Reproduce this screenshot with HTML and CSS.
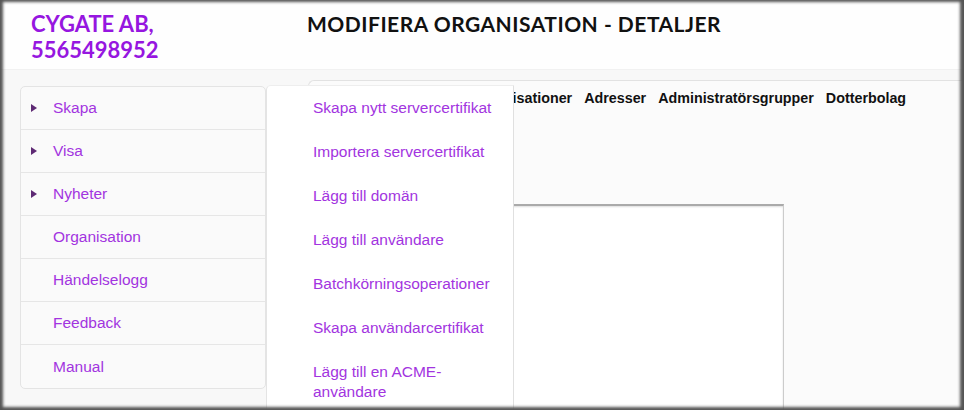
FILE: index.html
```html
<!DOCTYPE html>
<html lang="sv">
<head>
    <meta charset="UTF-8">
    <meta name="viewport" content="width=device-width, initial-scale=1.0">
    <title>Modifiera organisation - Detaljer</title>
    <link rel="stylesheet" href="styles.css">
</head>
<body>
    <div class="frame">
        <div class="header">
            <div class="brand">CYGATE AB,<br>5565498952</div>
            <h1>MODIFIERA ORGANISATION - DETALJER</h1>
        </div>
        <div class="main">
            <ul class="sidebar">
                <li class="has-sub"><span class="arrow"></span>Skapa</li>
                <li class="has-sub"><span class="arrow"></span>Visa</li>
                <li class="has-sub"><span class="arrow"></span>Nyheter</li>
                <li>Organisation</li>
                <li>Händelselogg</li>
                <li>Feedback</li>
                <li>Manual</li>
            </ul>
            <div class="content">
                <div class="tabs">
                    <span>Detaljer</span>
                    <span>Organisationer</span>
                    <span>Adresser</span>
                    <span>Administratörsgrupper</span>
                    <span>Dotterbolag</span>
                </div>
                <div class="panel"></div>
            </div>
        </div>
        <ul class="dropdown">
            <li>Skapa nytt servercertifikat</li>
            <li>Importera servercertifikat</li>
            <li>Lägg till domän</li>
            <li>Lägg till användare</li>
            <li>Batchkörningsoperationer</li>
            <li>Skapa användarcertifikat</li>
            <li>Lägg till en ACME-användare</li>
        </ul>
    </div>
</body>
</html>
```

FILE: styles.css
```css
body {
    margin: 0;
    padding: 0;
    font-family: "Liberation Sans", Arial, sans-serif;
    background-color: #555;
}
.frame {
    position: relative;
    width: 964px;
    height: 410px;
    overflow: hidden;
    background-color: #f8f8f8;
    box-sizing: border-box;
}
.frame::after {
    content: "";
    position: absolute;
    inset: 0;
    pointer-events: none;
    box-shadow: inset 4px 3px 3px -1px #555, inset -5px -4px 3px -1px #555;
}
.header {
    display: flex;
    height: 70px;
    box-sizing: border-box;
    padding: 11px 0 0 31px;
    background-color: #fefefe;
    border-bottom: 1px solid #f1f1f1;
}
.brand {
    width: 276px;
    font-family: Lato, "Liberation Sans", sans-serif;
    font-weight: bold;
    font-size: 22px;
    line-height: 26px;
    color: #9616e0;
}
.header h1 {
    margin: 0;
    font-family: Lato, "Liberation Sans", sans-serif;
    font-weight: bold;
    font-size: 21px;
    line-height: 25px;
    letter-spacing: 0.5px;
    color: #111;
}
.main {
    display: flex;
    padding-left: 20px;
}
.sidebar {
    list-style: none;
    margin: 16px 0 0 0;
    padding: 0;
    width: 246px;
    background-color: #fafafa;
    border: 1px solid #e4e4e4;
    border-radius: 5px;
    box-sizing: border-box;
    align-self: flex-start;
}
.sidebar li {
    display: flex;
    align-items: center;
    height: 43px;
    box-sizing: border-box;
    padding-left: 32px;
    font-size: 15.5px;
    color: #a234e0;
    border-bottom: 1px solid #e6e6e6;
    position: relative;
}
.sidebar li:last-child {
    border-bottom: none;
}
.arrow {
    position: absolute;
    left: 10px;
    top: 17px;
    width: 0;
    height: 0;
    border-top: 4.5px solid transparent;
    border-bottom: 4.5px solid transparent;
    border-left: 6px solid #5e2a74;
}
.content {
    flex: 1;
    margin: 10px 0 0 42px;
    height: 330px;
    background-color: #fbfbfb;
    border-top: 1px solid #e2e2e2;
    border-left: 1px solid #e2e2e2;
    border-top-left-radius: 6px;
}
.tabs {
    display: flex;
    gap: 12px;
    padding: 9px 0 0 97px;
    font-size: 14.3px;
    font-weight: bold;
    color: #111;
}
.panel {
    margin: 98px 0 0 150px;
    width: 324px;
    height: 220px;
    background-color: #fff;
    border-top: 2px solid #aaa;
    border-right: 1px solid #ccc;
    box-shadow: 0 1px 2px #ddd inset;
}
.dropdown {
    position: absolute;
    left: 266px;
    top: 85px;
    width: 248px;
    height: 330px;
    margin: 0;
    padding: 0;
    list-style: none;
    background-color: #fff;
    border-left: 1px solid #e4e4e4;
    border-right: 1px solid #e0e0e0;
    border-top: 1px solid #eee;
    border-top-left-radius: 5px;
    box-sizing: border-box;
}
.dropdown li {
    padding: 12px 8px 12px 46px;
    font-size: 15.5px;
    line-height: 20px;
    color: #a234e0;
}
```
